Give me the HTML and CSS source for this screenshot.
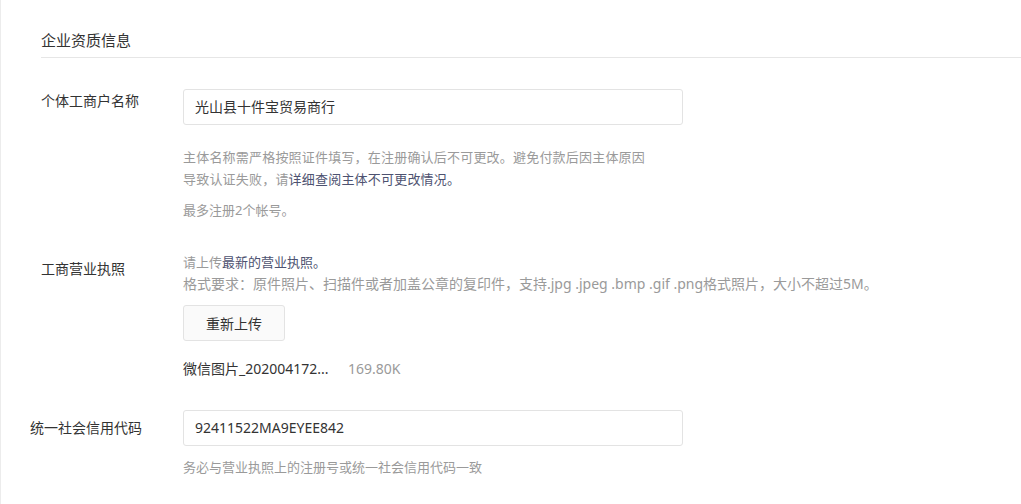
FILE: index.html
```html
<!DOCTYPE html>
<html lang="zh-CN">
<head>
    <meta charset="UTF-8">
    <meta name="viewport" content="width=device-width, initial-scale=1.0">
    <title>企业资质信息</title>
    <link rel="stylesheet" href="styles.css">
</head>
<body>
    <div class="page">
        <!-- Section title -->
        <div class="section-title">企业资质信息</div>

        <!-- Name -->
        <div class="form-row">
            <div class="form-label form-label-top">个体工商户名称</div>
            <div class="form-body">
                <div class="text-input">光山县十件宝贸易商行</div>
                <p class="tips tips-first">主体名称需严格按照证件填写，在注册确认后不可更改。避免付款后因主体原因导致认证失败，请<a href="#" class="tips-link">详细查阅主体不可更改情况。</a></p>
                <p class="tips tips-small-gap">最多注册2个帐号。</p>
            </div>
        </div>

        <!-- License -->
        <div class="form-row form-row-license">
            <div class="form-label">工商营业执照</div>
            <div class="form-body">
                <p class="tips">请上传<a href="#" class="tips-link">最新的营业执照。</a></p>
                <p class="tips tips-format">格式要求：原件照片、扫描件或者加盖公章的复印件，支持.jpg .jpeg .bmp .gif .png格式照片，大小不超过5M。</p>
                <button class="upload-btn">重新上传</button>
                <div class="file-line">
                    <span class="file-name">微信图片_202004172...</span>
                    <span class="file-size">169.80K</span>
                </div>
            </div>
        </div>

        <!-- Credit code -->
        <div class="form-row form-row-code">
            <div class="form-label form-label-wide">统一社会信用代码</div>
            <div class="form-body">
                <div class="text-input">92411522MA9EYEE842</div>
                <p class="tips tips-after-input">务必与营业执照上的注册号或统一社会信用代码一致</p>
            </div>
        </div>
    </div>
</body>
</html>
```

FILE: styles.css
```css
/* Base */
html, body {
    margin: 0;
    background-color: #ffffff;
}

body {
    font-family: "Noto Sans", "Noto Sans CJK SC", "Microsoft YaHei", sans-serif;
    color: #333333;
    font-size: 14px;
}

.page {
    min-height: 100vh;
    box-sizing: border-box;
    border-left: 1px solid #ececec;
    padding-left: 40px;
}

/* Section header */
.section-title {
    font-size: 15px;
    line-height: 20px;
    padding-top: 30px;
    padding-bottom: 7px;
    border-bottom: 1px solid #e6e6e6;
}

/* Form rows */
.form-row {
    display: grid;
    grid-template-columns: 142px 1fr;
    margin-top: 31px;
}

.form-row-license {
    margin-top: 30px;
}

.form-row-code {
    margin-top: 31px;
}

.form-label {
    font-size: 14px;
    line-height: 20px;
    padding-top: 8px;
    white-space: nowrap;
}

.form-label-top {
    padding-top: 2px;
}

.form-label-wide {
    margin-left: -11px;
}

.form-body {
    min-width: 0;
}

/* Inputs */
.text-input {
    width: 500px;
    height: 36px;
    box-sizing: border-box;
    border: 1px solid #e3e3e3;
    border-radius: 3px;
    padding: 0 11px;
    font-size: 14px;
    line-height: 34px;
    color: #333333;
}

/* Helper text */
.tips {
    margin: 0;
    max-width: 470px;
    font-size: 13px;
    line-height: 22px;
    color: #9a9a9a;
}

.form-row-license .tips {
    max-width: none;
}

.tips-format {
    font-size: 14px;
}

.tips-first {
    margin-top: 21px;
    letter-spacing: 0.2px;
}

.tips-small-gap {
    margin-top: 9px;
}

.tips-after-input {
    margin-top: 10px;
}

.tips-link {
    color: #4d5270;
    text-decoration: none;
}

/* Upload */
.upload-btn {
    display: block;
    margin-top: 10px;
    height: 36px;
    padding: 0 22px;
    background-color: #fafafa;
    border: 1px solid #e3e3e3;
    border-radius: 3px;
    font-family: inherit;
    font-size: 14px;
    color: #333333;
    cursor: pointer;
}

.file-line {
    display: flex;
    align-items: center;
    height: 22px;
    margin-top: 16px;
    font-size: 14px;
}

.file-name {
    width: 165px;
    color: #333333;
}

.file-size {
    color: #9a9a9a;
}
```
